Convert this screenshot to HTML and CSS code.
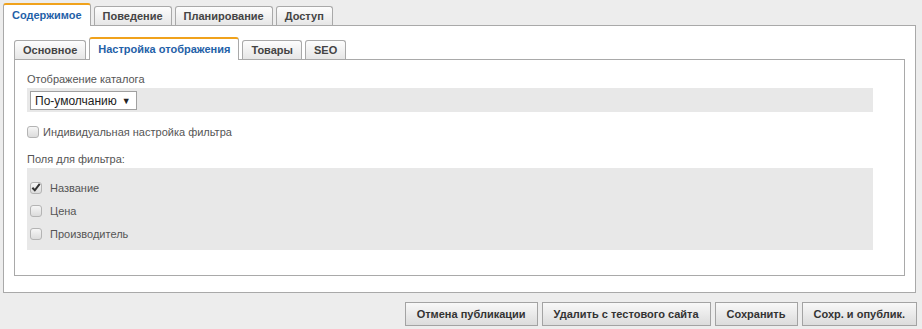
FILE: index.html
```html
<!DOCTYPE html>
<html lang="ru">
<head>
    <meta charset="UTF-8">
    <title>Редактирование категории</title>
    <link rel="stylesheet" href="styles.css">
</head>
<body>
    <div class="page">
        <div class="tabs">
            <div class="tab active">Содержимое</div>
            <div class="tab">Поведение</div>
            <div class="tab">Планирование</div>
            <div class="tab">Доступ</div>
        </div>

        <div class="panel">
            <div class="tabs">
                <div class="tab">Основное</div>
                <div class="tab active">Настройка отображения</div>
                <div class="tab">Товары</div>
                <div class="tab">SEO</div>
            </div>

            <div class="panel inner">
                <div class="field-label">Отображение каталога</div>
                <div class="field-box">
                    <span class="select">По-умолчанию <span class="arrow">&#9660;</span></span>
                </div>

                <label class="check-row">
                    <span class="check"></span>
                    Индивидуальная настройка фильтра
                </label>

                <div class="field-label spaced">Поля для фильтра:</div>
                <div class="field-box list">
                    <label class="check-row">
                        <span class="check checked">
                            <svg width="11" height="11" viewBox="0 0 11 11"><path d="M1.5 5.8 L4.2 8.6 L9.6 1.6" fill="none" stroke="#333" stroke-width="2.2"/></svg>
                        </span>
                        Название
                    </label>
                    <label class="check-row">
                        <span class="check"></span>
                        Цена
                    </label>
                    <label class="check-row">
                        <span class="check"></span>
                        Производитель
                    </label>
                </div>
            </div>
        </div>

        <div class="actions">
            <button class="btn">Отмена публикации</button>
            <button class="btn">Удалить с тестового сайта</button>
            <button class="btn">Сохранить</button>
            <button class="btn">Сохр. и опублик.</button>
        </div>
    </div>
</body>
</html>
```

FILE: styles.css
```css
:root {
    --page-bg: #ededed;
    --border: #a9a9a9;
    --box-bg: #e8e8e8;
    --text: #555555;
    --tab-text: #444444;
    --active-blue: #1f61a8;
    --accent-orange: #f0a21c;
    --white: #FFFFFF;
}

* {
    margin: 0;
    padding: 0;
    box-sizing: border-box;
}

body {
    background-color: var(--page-bg);
    color: var(--text);
    font-family: 'Liberation Sans', Arial, sans-serif;
    font-size: 11px;
}

.page {
    padding: 3px 6px 0 3px;
}

/* Onglets */
.tabs {
    display: flex;
    align-items: flex-end;
    gap: 3px;
    position: relative;
    z-index: 1;
    margin-bottom: -1px;
}

.tab {
    height: 19px;
    line-height: 18px;
    margin-bottom: 1px;
    padding: 0 8px;
    border: 1px solid var(--border);
    border-bottom: none;
    border-radius: 3px 3px 0 0;
    background: linear-gradient(#fdfdfd, #e6e6e6);
    color: var(--tab-text);
    font-size: 11px;
    font-weight: bold;
}

.tab.active {
    height: 23px;
    line-height: 20px;
    margin-bottom: 0;
    border-top: 2px solid var(--accent-orange);
    background: var(--white);
    color: var(--active-blue);
}

/* Panneaux */
.panel {
    background-color: var(--white);
    border: 1px solid var(--border);
    padding: 11px 10px 16px 10px;
}

.panel.inner {
    padding: 11px 31px 25px 12px;
}

.field-label {
    line-height: 16px;
    margin-bottom: 1px;
}

.field-label.spaced {
    margin-top: 11px;
}

.field-box {
    background-color: var(--box-bg);
    padding: 3px 3px 2px 3px;
}

.field-box.list {
    padding: 8px 3px 5px 3px;
}

.select {
    display: inline-flex;
    align-items: center;
    gap: 5px;
    height: 19px;
    padding: 0 5px 0 4px;
    background-color: var(--white);
    border: 1px solid #a0a0a0;
    color: #222;
    font-size: 12px;
}

.select .arrow {
    font-size: 9px;
}

.check-row {
    display: flex;
    align-items: center;
    gap: 4px;
    height: 16px;
    margin-top: 12px;
}

.field-box .check-row {
    height: 23px;
    margin-top: 0;
    gap: 8px;
}

.check {
    display: flex;
    align-items: center;
    justify-content: center;
    width: 12px;
    height: 12px;
    border: 1px solid #b4b4b4;
    border-radius: 3px;
    background: linear-gradient(#f6f6f6, #dcdcdc);
}

/* Boutons */
.actions {
    display: flex;
    justify-content: flex-end;
    gap: 4px;
    margin-top: 9px;
    margin-right: -1px;
}

.btn {
    height: 24px;
    padding: 0 11px;
    border: 1px solid #a3a3a3;
    background: linear-gradient(#f8f8f8, #dcdcdc);
    color: #333;
    font-family: 'Liberation Sans', Arial, sans-serif;
    font-size: 11px;
    font-weight: bold;
    cursor: pointer;
}
```
